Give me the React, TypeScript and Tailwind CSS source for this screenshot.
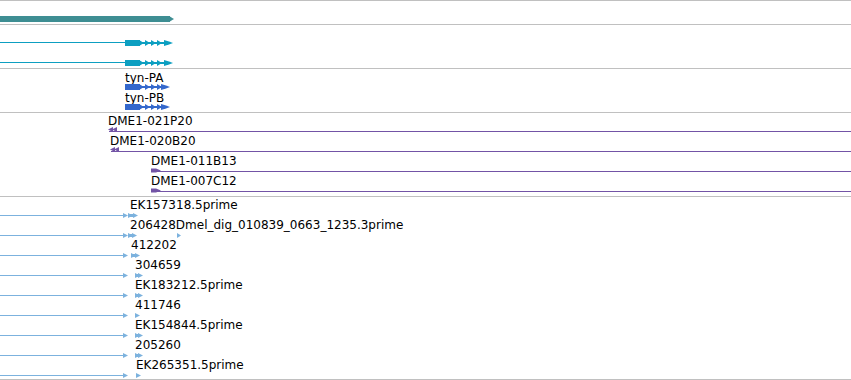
const TEAL = "#3e8e93";
const CYAN = "#0d9fc1";
const BLUE = "#3468cc";
const PURPLE = "#7354a6";
const LIGHT = "#7cb2de";

type Est = { label: string; extra?: string; pad: string; fx: number; fw: number; tick?: number };

const estRows: Est[] = [
  { label: "EK157318.5prime", pad: "pl-[130px]", fx: 128, fw: 10 },
  { label: "206428", extra: "Dmel_dig_010839_0663_1235.3prime", pad: "pl-[130px]", fx: 128, fw: 9, tick: 177 },
  { label: "412202", pad: "pl-[131px]", fx: 131, fw: 9 },
  { label: "304659", pad: "pl-[135px]", fx: 135, fw: 8 },
  { label: "EK183212.5prime", pad: "pl-[135px]", fx: 135, fw: 8 },
  { label: "411746", pad: "pl-[135px]", fx: 135, fw: 5 },
  { label: "EK154844.5prime", pad: "pl-[135px]", fx: 135, fw: 8 },
  { label: "205260", pad: "pl-[135px]", fx: 135, fw: 8 },
  { label: "EK265351.5prime", pad: "pl-[136px]", fx: 136, fw: 5 },
];

const clones = [
  { label: "DME1-021P20", pad: "pl-[108px]", x: 108, dir: "left" },
  { label: "DME1-020B20", pad: "pl-[110px]", x: 110, dir: "left" },
  { label: "DME1-011B13", pad: "pl-[151px]", x: 151, dir: "right" },
  { label: "DME1-007C12", pad: "pl-[151px]", x: 151, dir: "right" },
];

function Track({ className, children }: { className: string; children?: React.ReactNode }) {
  return <div className={`flex flex-col border-b border-[#c0c0c0] ${className}`}>{children}</div>;
}

// exon block, then a run of strand chevrons; `lead` draws the intron line coming in from the left
function Transcript({ color, end, lead }: { color: string; end: number; lead?: boolean }) {
  const tips = [139, 145, 151, 157];
  return (
    <svg width={end} height={6} className="shrink-0">
      {lead && <rect x={0} y={2} width={126} height={1} fill={color} />}
      <rect x={125} y={0} width={15} height={6} fill={color} />
      <rect x={139} y={2} width={end - 143} height={2} fill={color} />
      {tips.map((t) => (
        <polygon key={t} points={`${t},0 ${t + 5},3 ${t},6`} fill={color} />
      ))}
      <polygon points={`${end - 9},0 ${end - 4},1.5 ${end},3 ${end - 4},4.5 ${end - 9},6`} fill={color} />
    </svg>
  );
}

function EstGlyph({ r }: { r: Est }) {
  const { fx, fw } = r;
  return (
    <svg width={190} height={5} className="mt-px shrink-0">
      <rect x={0} y={2} width={124} height={1} fill={LIGHT} />
      <polygon points="123,0 128,2.5 123,5" fill={LIGHT} />
      {fw > 6 && <rect x={fx} y={1} width={fw - 5} height={3} fill={LIGHT} />}
      <polygon points={`${fx},0 ${fx + Math.min(fw, 5)},2.5 ${fx},5`} fill={LIGHT} />
      {fw > 6 && <polygon points={`${fx + fw - 5},0 ${fx + fw},2.5 ${fx + fw - 5},5`} fill={LIGHT} />}
      {r.tick && <polygon points={`${r.tick},0 ${r.tick + 4},2.5 ${r.tick},5`} fill={LIGHT} />}
    </svg>
  );
}

function CloneGlyph({ x, dir }: { x: number; dir: string }) {
  const w = 851 - x;
  return (
    <svg width={w} height={6} className="shrink-0">
      <rect x={1} y={4} width={w} height={1} fill={PURPLE} />
      {dir === "left" ? (
        <>
          <polygon points="0,2.5 5,0 5,5" fill={PURPLE} />
          <polygon points="4,2.5 9,0 9,5" fill={PURPLE} />
        </>
      ) : (
        <polygon points="0,1.5 5,1.5 10,3.5 5,5.5 0,5.5" fill={PURPLE} />
      )}
    </svg>
  );
}

export default function App() {
  return (
    <div className="flex h-[380px] w-[851px] flex-col overflow-hidden border-t border-[#c0c0c0] bg-white font-['DejaVu_Sans',sans-serif] text-[12px] leading-[14px] text-black">
      {/* gene span */}
      <Track className="h-[24px] pt-[15px]">
        <svg width={174} height={6}>
          <rect x={0} y={0} width={170} height={6} fill={TEAL} />
          <polygon points="169,0 174,3 169,6" fill={TEAL} />
        </svg>
      </Track>

      {/* mRNA models */}
      <Track className="h-[44px] gap-[14px] pt-[15px]">
        <Transcript color={CYAN} end={173} lead />
        <Transcript color={CYAN} end={173} lead />
      </Track>

      {/* transcripts */}
      <Track className="h-[44px] pt-[2px]">
        {["tyn-PA", "tyn-PB"].map((name) => (
          <div key={name} className="flex h-[20px] flex-col">
            <div className="h-[13px] pl-[125px]">{name}</div>
            <Transcript color={BLUE} end={170} />
          </div>
        ))}
      </Track>

      {/* BAC clones */}
      <Track className="h-[84px] pt-px">
        {clones.map((c) => (
          <div key={c.label} className={`flex h-[20px] flex-col ${c.pad}`}>
            <div className="h-[13px] whitespace-nowrap">{c.label}</div>
            <CloneGlyph x={c.x} dir={c.dir} />
          </div>
        ))}
      </Track>

      {/* ESTs */}
      <Track className="h-[183px] pt-px">
        {estRows.map((r) => (
          <div key={r.label} className="flex h-[20px] flex-col">
            <div className={`flex h-[14px] whitespace-nowrap ${r.pad}`}>
              <span>{r.label}</span>
              {r.extra && <span>{r.extra}</span>}
            </div>
            <EstGlyph r={r} />
          </div>
        ))}
      </Track>
    </div>
  );
}
